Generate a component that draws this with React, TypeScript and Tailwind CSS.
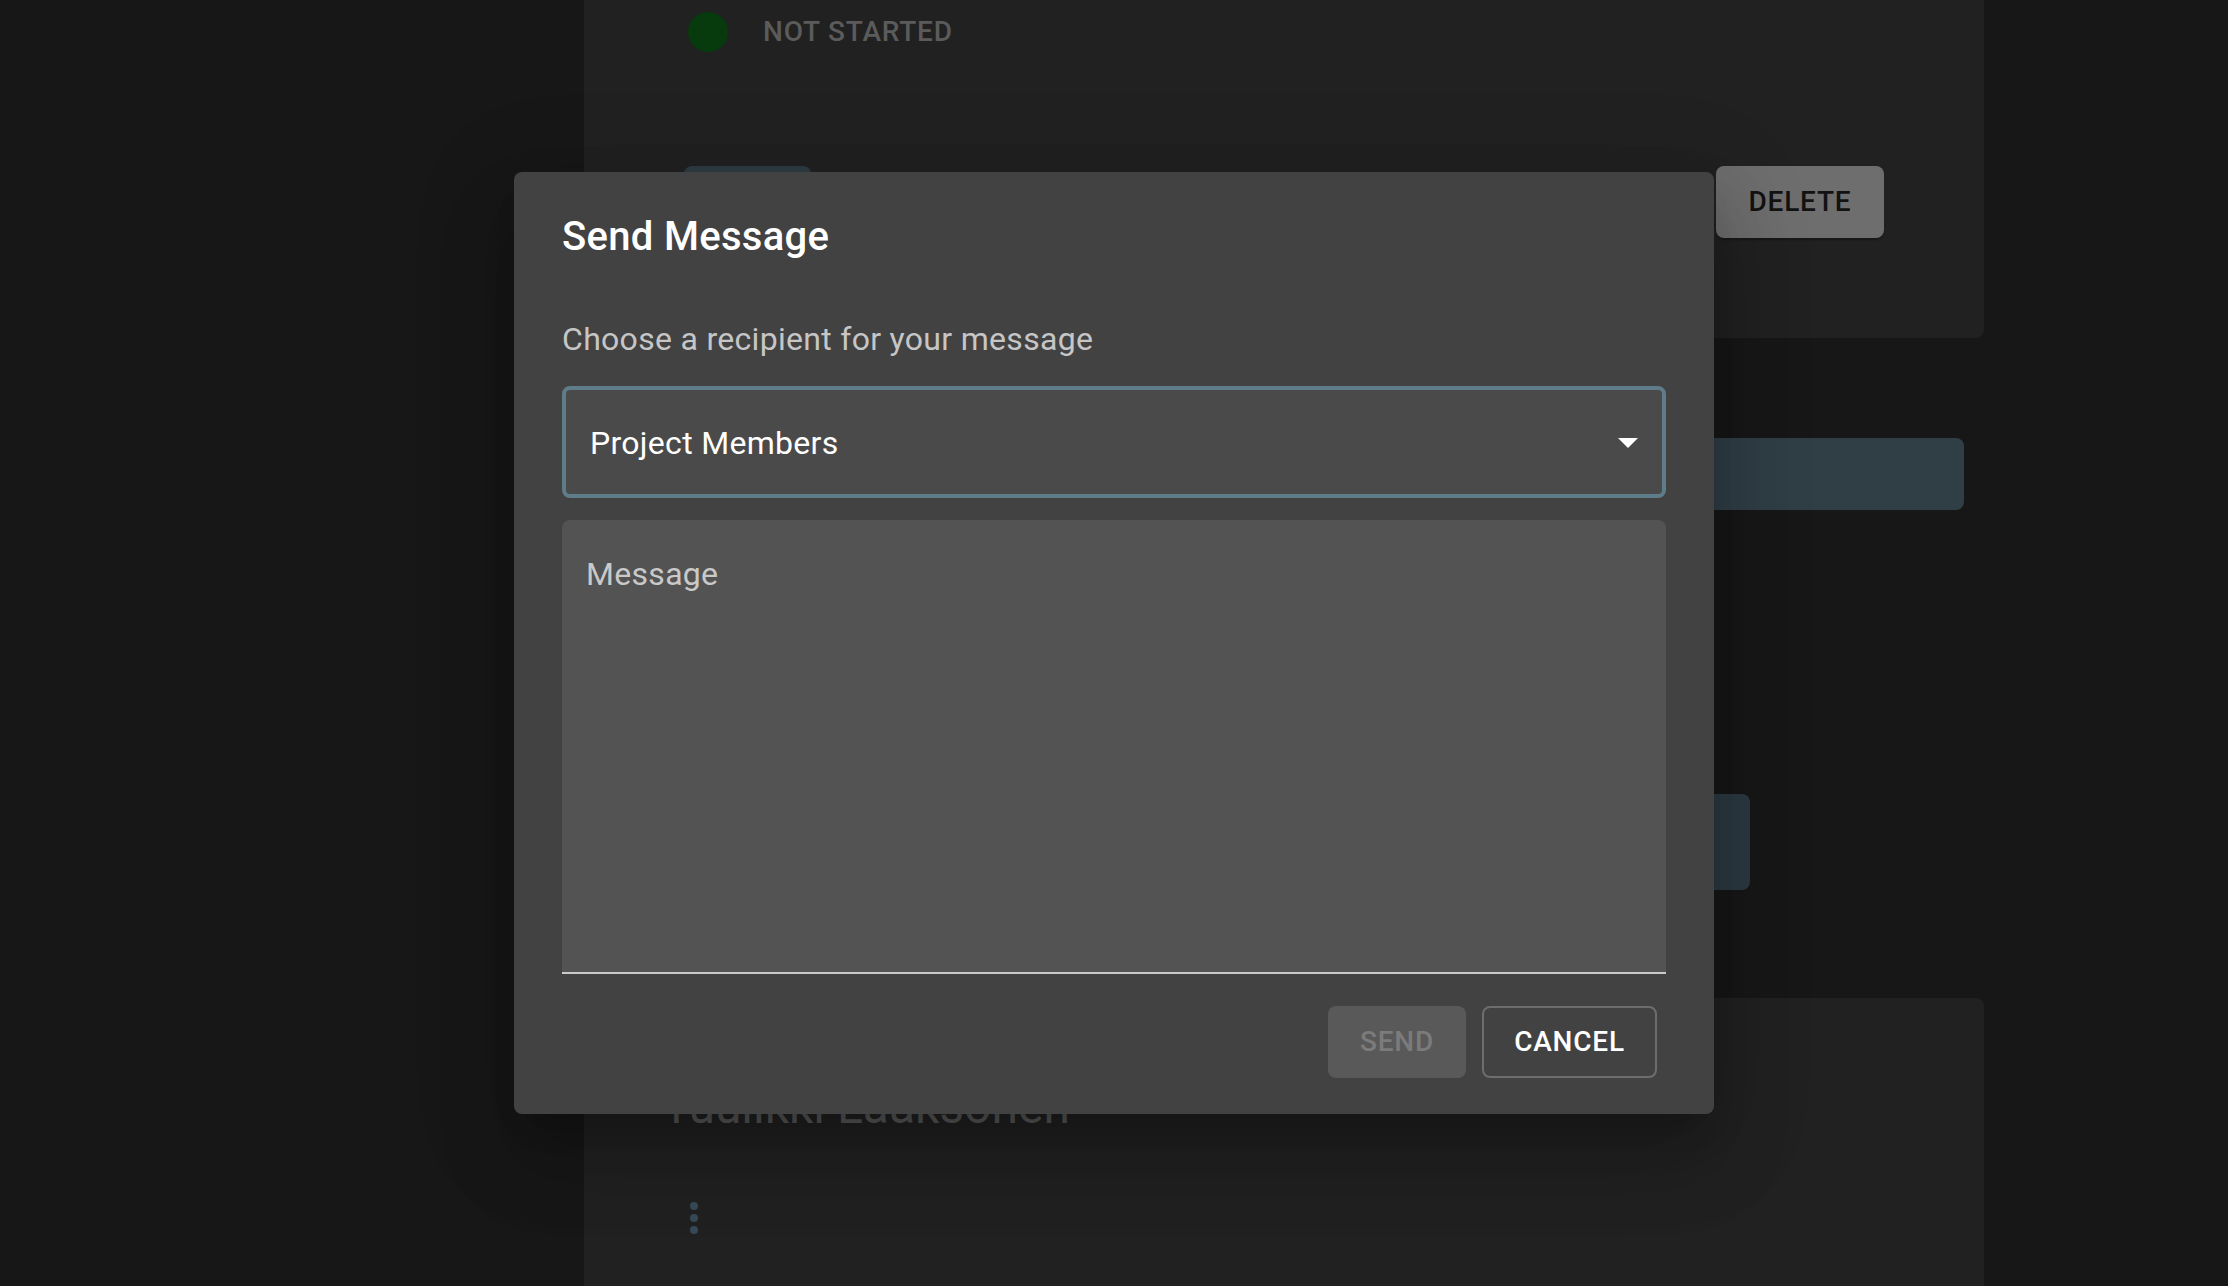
const font = "font-['Roboto','Liberation_Sans',sans-serif]"

const MoreVert = () => (
  <svg width="48" height="48" viewBox="0 0 24 24" className="fill-[#364b57]">
    <circle cx="12" cy="6" r="2" />
    <circle cx="12" cy="12" r="2" />
    <circle cx="12" cy="18" r="2" />
  </svg>
)

const ArrowDropDown = () => (
  <svg width="48" height="48" viewBox="0 0 24 24" className="fill-white">
    <path d="M7 10l5 5 5-5z" />
  </svg>
)

const Background = () => (
  <div className="ml-[584px] flex w-[1400px] flex-col">
    <section className="flex h-[338px] flex-col rounded-b-lg bg-[#212121]">
      <div className="mt-[12px] flex h-[40px] items-center gap-[35px] pl-[104px]">
        <span className="h-[40px] w-[40px] rounded-full bg-[#073a0c]" />
        <span className="text-[28px] leading-[40px] font-medium tracking-[0.8px] text-[#5b5b5b]">NOT STARTED</span>
      </div>
      <div className="mt-[114px] flex items-start justify-between px-[100px]">
        <button className="h-[72px] w-[127px] rounded-lg bg-[#2e3c44]" />
        <button className="h-[72px] w-[168px] rounded-lg bg-[#6e6e6e] text-[28px] font-medium tracking-[0.8px] text-[#121212] shadow-[0_3px_2px_-1px_rgba(0,0,0,0.3)]">
          DELETE
        </button>
      </div>
    </section>
    <div className="mt-[100px] ml-[20px] h-[72px] w-[1360px] rounded-lg bg-[#303e46]" />
    <div className="mt-[284px] ml-[20px] h-[96px] w-[1146px] rounded-lg bg-[#2c3941]" />
    <section className="mt-[108px] flex h-[320px] flex-col rounded-t-lg bg-[#212121]">
      <h5 className="mt-[77px] pl-[78px] text-[48px] leading-[64px] text-[#5a5a5a]">Tuulikki Laaksonen</h5>
      <div className="mt-[55px] pl-[86px]">
        <MoreVert />
      </div>
    </section>
  </div>
)

const SendMessageDialog = () => (
  <div className="absolute top-[172px] left-[514px] flex w-[1200px] flex-col rounded-lg bg-[#424242] shadow-[0_22px_30px_-14px_rgba(0,0,0,0.2),0_48px_76px_6px_rgba(0,0,0,0.14),0_18px_92px_16px_rgba(0,0,0,0.12)]">
    <h2 className="px-[48px] pt-[33px] pb-[31px] text-[40px] leading-[64px] font-medium tracking-[0.3px] text-white">Send Message</h2>
    <div className="flex flex-col px-[48px] pt-[15px]">
      <p className="mb-[23px] text-[32px] leading-[48px] tracking-[0.3px] text-[#c6c6c6]">Choose a recipient for your message</p>
      <div className="flex h-[112px] items-center justify-between rounded-lg border-[4px] border-[#5f7c8a] bg-[#4a4a4a] pr-[10px] pl-[24px]">
        <span className="mt-[2px] text-[32px] leading-[40px] tracking-[0.3px] text-white">Project Members</span>
        <ArrowDropDown />
      </div>
      <div className="mt-[22px] h-[454px] rounded-t-lg border-b-2 border-[#c9c9c9] bg-[#535353] pt-[38px] pl-[24px]">
        <span className="block text-[32px] leading-[32px] tracking-[0.3px] text-[#c9c9c9]">Message</span>
      </div>
    </div>
    <div className="flex justify-end gap-[16px] pt-[32px] pr-[57px] pb-[36px]">
      <button disabled className="h-[72px] w-[138px] rounded-lg bg-[#595959] text-[28px] font-medium tracking-[0.8px] text-[#7b7b7b]">
        SEND
      </button>
      <button className="h-[72px] w-[175px] rounded-lg border-2 border-[#6d6d6d] text-[28px] font-medium tracking-[0.8px] text-white">
        CANCEL
      </button>
    </div>
  </div>
)

export default function App() {
  return (
    <div className={`relative h-[1286px] w-[2228px] overflow-hidden bg-[#171717] ${font}`}>
      <Background />
      <SendMessageDialog />
    </div>
  )
}
